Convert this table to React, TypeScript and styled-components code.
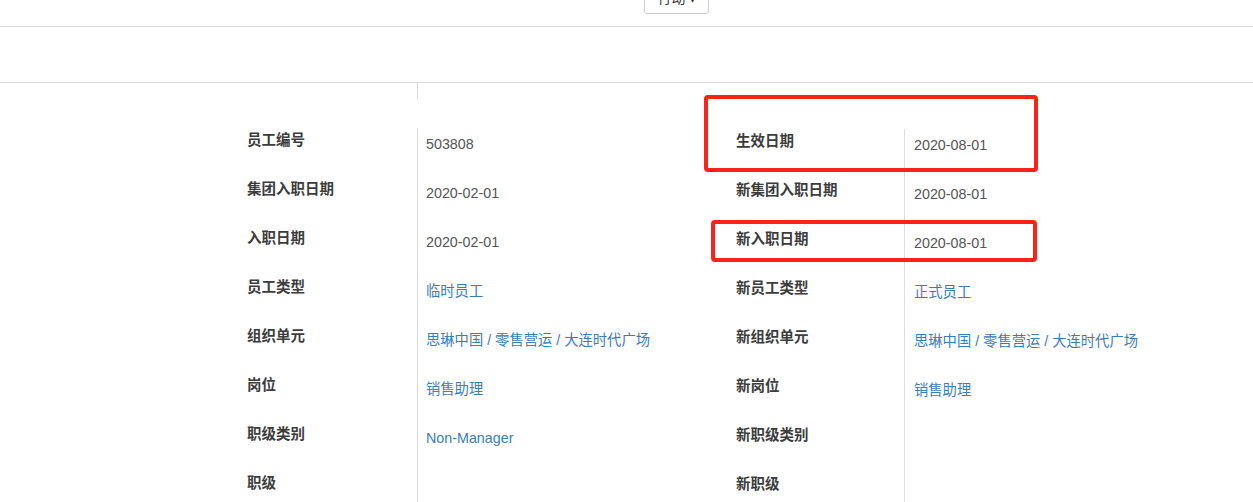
import React from "react";
import styled, { createGlobalStyle } from "styled-components";

const Global = createGlobalStyle`
  html, body { margin: 0; padding: 0; background: #fff; overflow: hidden; }
  body { font-family: "Liberation Sans", "Noto Sans CJK SC", sans-serif; }
`;

const Page = styled.div`
  position: relative;
  width: 1253px;
  height: 502px;
  overflow: hidden;
`;

const TopBar = styled.div`
  height: 26px;
  border-bottom: 1px solid #dcdcdc;
  display: flex;
  align-items: flex-start;
  padding-left: 644px;
  overflow: hidden;
`;

const ActionButton = styled.button`
  margin-top: -20px;
  height: 34px;
  width: 65px;
  padding: 0 8px;
  border: 1px solid #cfcfcf;
  border-radius: 0 0 3px 3px;
  background: #fff;
  color: #333;
  font-family: "Noto Sans CJK SC", sans-serif;
  font-size: 14px;
  line-height: 32px;
  white-space: nowrap;
`;

const Band = styled.div`
  height: 55px;
  border-bottom: 1px solid #dcdcdc;
`;

const Main = styled.div`
  display: flex;
  align-items: flex-start;
`;

const Panel = styled.div<{ $label: number; $value: number; $top: number; $labelPad: number }>`
  display: grid;
  grid-template-columns: ${(p) => p.$label}px ${(p) => p.$value}px;
  padding-top: ${(p) => p.$top}px;
  & > .lab { padding-left: ${(p) => p.$labelPad}px; }
`;

const Stub = styled.div`
  height: 15px;
  grid-column: 2;
  border-left: 1px solid #dcdcdc;
  margin-bottom: 30px;
`;

const StubSpacer = styled.div`
  height: 15px;
  grid-column: 1;
  margin-bottom: 30px;
`;

const Label = styled.div`
  height: 49px;
  box-sizing: border-box;
  padding-top: 2px;
  font-family: "Noto Sans CJK SC", sans-serif;
  font-weight: 700;
  font-size: 14.5px;
  line-height: 18px;
  color: #3c3c3c;
  white-space: nowrap;
`;

const Value = styled.div<{ $pad: number; $link?: boolean }>`
  height: 49px;
  box-sizing: border-box;
  border-left: 1px solid #dcdcdc;
  padding-top: 7px;
  padding-left: ${(p) => p.$pad}px;
  font-family: "Liberation Sans", "Noto Sans CJK SC", sans-serif;
  font-size: 14.3px;
  line-height: 18px;
  color: ${(p) => (p.$link ? "#3a7dbd" : "#555")};
  white-space: nowrap;
`;

const Mark = styled.div<{ $l: number; $t: number; $w: number; $h: number }>`
  position: absolute;
  left: ${(p) => p.$l}px;
  top: ${(p) => p.$t}px;
  width: ${(p) => p.$w}px;
  height: ${(p) => p.$h}px;
  box-sizing: border-box;
  border: 4px solid #fa2219;
  border-radius: 4px;
  pointer-events: none;
`;

type Row = { label: string; value?: string; link?: boolean };

const left: Row[] = [
  { label: "员工编号", value: "503808" },
  { label: "集团入职日期", value: "2020-02-01" },
  { label: "入职日期", value: "2020-02-01" },
  { label: "员工类型", value: "临时员工", link: true },
  { label: "组织单元", value: "思琳中国 / 零售营运 / 大连时代广场", link: true },
  { label: "岗位", value: "销售助理", link: true },
  { label: "职级类别", value: "Non-Manager", link: true },
  { label: "职级" },
];

const right: Row[] = [
  { label: "生效日期", value: "2020-08-01" },
  { label: "新集团入职日期", value: "2020-08-01" },
  { label: "新入职日期", value: "2020-08-01" },
  { label: "新员工类型", value: "正式员工", link: true },
  { label: "新组织单元", value: "思琳中国 / 零售营运 / 大连时代广场", link: true },
  { label: "新岗位", value: "销售助理", link: true },
  { label: "新职级类别" },
  { label: "新职级" },
];

export default function App() {
  return (
    <Page>
      <Global />
      <TopBar>
        <ActionButton>行动 ▾</ActionButton>
      </TopBar>
      <Band />
      <Main>
        <Panel $label={417} $value={319} $top={0} $labelPad={247}>
          <StubSpacer />
          <Stub />
          {left.map((r) => (
            <React.Fragment key={r.label}>
              <Label className="lab">{r.label}</Label>
              <Value $pad={8} $link={r.link}>{r.value}</Value>
            </React.Fragment>
          ))}
        </Panel>
        <Panel $label={168} $value={349} $top={46} $labelPad={0}>
          {right.map((r) => (
            <React.Fragment key={r.label}>
              <Label className="lab">{r.label}</Label>
              <Value $pad={9} $link={r.link}>{r.value}</Value>
            </React.Fragment>
          ))}
        </Panel>
      </Main>
      <Mark $l={704} $t={95} $w={334} $h={77} />
      <Mark $l={711} $t={220} $w={326} $h={42} />
    </Page>
  );
}
